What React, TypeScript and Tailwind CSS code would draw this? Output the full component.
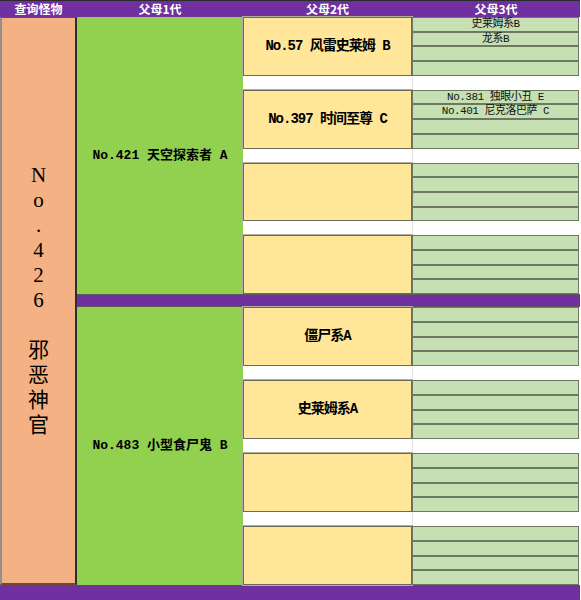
import React from "react";

type Group = { name: string; kids: string[] };
type Block = { parent: string; groups: Group[] };

const blocks: Block[] = [
  {
    parent: "No.421 天空探索者 A",
    groups: [
      { name: "No.57 风雷史莱姆 B", kids: ["史莱姆系B", "龙系B", "", ""] },
      { name: "No.397 时间至尊 C", kids: ["No.381 独眼小丑 E", "No.401 尼克洛巴萨 C", "", ""] },
      { name: "", kids: ["", "", "", ""] },
      { name: "", kids: ["", "", "", ""] },
    ],
  },
  {
    parent: "No.483 小型食尸鬼 B",
    groups: [
      { name: "僵尸系A", kids: ["", "", "", ""] },
      { name: "史莱姆系A", kids: ["", "", "", ""] },
      { name: "", kids: ["", "", "", ""] },
      { name: "", kids: ["", "", "", ""] },
    ],
  },
];

const vertical = ["N", "o", ".", "4", "2", "6", "\u00a0", "邪", "恶", "神", "官"];

function GroupRow({ g }: { g: Group }) {
  return (
    <div className="flex flex-1 min-h-0">
      <div className="w-[169px] bg-[#ffe699] border border-[#6b6b5b] shadow-[0_0_0_1px_#b0b0a0] flex items-center justify-center text-[14px] font-bold tracking-[-1px] text-black whitespace-pre">
        {g.name}
      </div>
      <div className="w-[167px] flex flex-col">
        {g.kids.map((k, i) => (
          <div
            key={i}
            className="flex-1 min-h-0 bg-[#c6e0b4] border border-[#6c7860] flex items-center justify-center text-[11px] leading-[11px] tracking-[-0.5px] text-[#111] whitespace-pre"
          >
            {k}
          </div>
        ))}
      </div>
      <div className="w-[1px]" />
    </div>
  );
}

function Gap() {
  return (
    <div className="flex h-[14px] shrink-0 bg-white">
      <div className="w-[169px]" />
      <div className="flex-1 border-l border-[#e2e2e2]" />
    </div>
  );
}

function BlockView({ b, h }: { b: Block; h: string }) {
  return (
    <div className={`flex ${h}`}>
      <div className="w-[166px] bg-[#92d050] flex items-center justify-center text-[13px] font-bold tracking-[0px] text-black whitespace-pre">
        {b.parent}
      </div>
      <div className="w-[337px] flex flex-col">
        <GroupRow g={b.groups[0]} />
        <Gap />
        <GroupRow g={b.groups[1]} />
        <Gap />
        <GroupRow g={b.groups[2]} />
        <Gap />
        <GroupRow g={b.groups[3]} />
      </div>
    </div>
  );
}

export default function App() {
  return (
    <div className="w-[581px] h-[600px] bg-white overflow-hidden font-['Liberation_Mono','Noto_Sans_CJK_SC',monospace]">
      <div className="w-[580px] flex h-[17px] bg-[#7030a0] border-t border-[#2a2a2a] text-white text-[12px] font-bold font-['Noto_Sans_CJK_SC',sans-serif] leading-[15px]">
        <div className="w-[77px] text-center">查询怪物</div>
        <div className="w-[166px] text-center">父母1代</div>
        <div className="w-[169px] text-center">父母2代</div>
        <div className="w-[168px] text-center">父母3代</div>
      </div>
      <div className="w-[580px] flex h-[568px]">
        <div className="w-[77px] bg-[#f4b183] border-l-2 border-l-[#8f8f8f] border-r-2 border-r-[#2e2e2e] border-b-2 border-b-[#6a4a36] border-t border-t-[#555] flex flex-col items-center justify-center font-['Liberation_Serif','Noto_Sans_CJK_SC',serif] text-[21px] leading-[25px] text-black">
          {vertical.map((c, i) => (
            <div key={i} className="h-[25px]">
              {c}
            </div>
          ))}
        </div>
        <div className="w-[503px] flex flex-col">
          <BlockView b={blocks[0]} h="h-[277px]" />
          <div className="h-[13px] bg-[#7030a0] border-y border-[#5b5b5b]" />
          <BlockView b={blocks[1]} h="h-[278px]" />
        </div>
      </div>
      <div className="w-[580px] h-[15px] bg-[#7030a0]" />
    </div>
  );
}
